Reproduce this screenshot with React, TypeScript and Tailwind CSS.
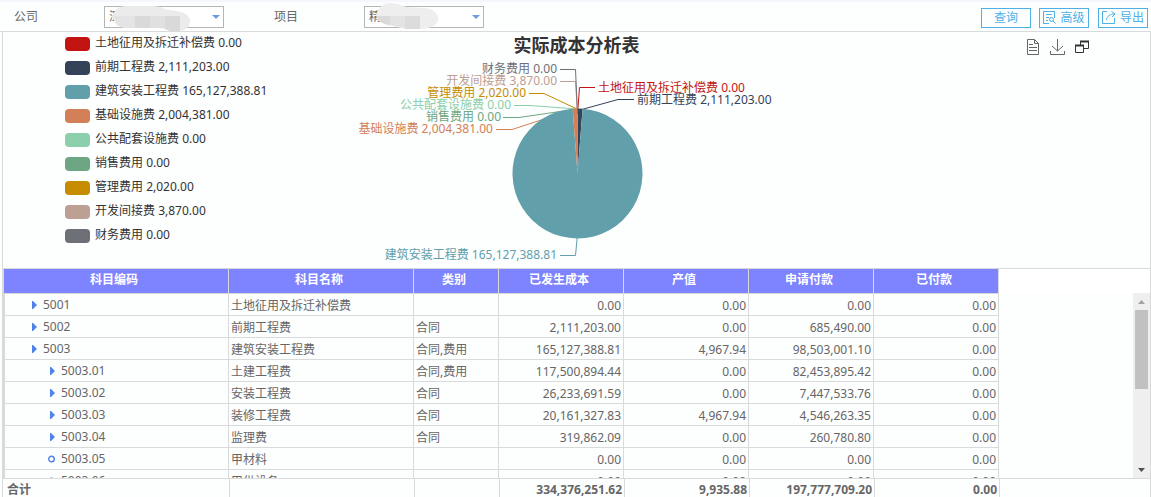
import { FC, ReactNode } from "react";

interface CostItem {
  name: string;
  value: number;
  color: string;
  // leader line and label anchor, relative to the pie centre
  line: string;
  x: number;
  y: number;
  anchor: "start" | "end";
}

interface Row {
  code: string;
  name: string;
  type: string;
  values: string[];
  leaf?: boolean;
}

const items: CostItem[] = [
  { name: "土地征用及拆迁补偿费", value: 0, color: "#c21410", line: "0.5,-60 2.5,-86.5 18,-86.5", x: 21, y: -82, anchor: "start" },
  { name: "前期工程费", value: 2111203, color: "#354358", line: "3,-64 41,-74.5 57,-74.5", x: 60, y: -70, anchor: "start" },
  { name: "建筑安装工程费", value: 165127388.81, color: "#619fab", line: "0.5,60 -1.5,81.5 -17,81.5", x: -20, y: 85, anchor: "end" },
  { name: "基础设施费", value: 2004381, color: "#d37f58", line: "-2,-65 -65,-44.5 -81,-44.5", x: -84, y: -41, anchor: "end" },
  { name: "公共配套设施费", value: 0, color: "#8bcfac", line: "0,-65 -47,-68.5 -63,-68.5", x: -66, y: -65, anchor: "end" },
  { name: "销售费用", value: 0, color: "#6da682", line: "0,-65 -58,-56.5 -74,-56.5", x: -76, y: -53, anchor: "end" },
  { name: "管理费用", value: 2020, color: "#c68c00", line: "0,-65 -33,-80.5 -48,-80.5", x: -51, y: -77, anchor: "end" },
  { name: "开发间接费", value: 3870, color: "#bca094", line: "0.5,-60 -1.5,-92.5 -17,-92.5", x: -20, y: -89, anchor: "end" },
  { name: "财务费用", value: 0, color: "#6e7077", line: "0.5,-60 -1.5,-104.5 -17,-104.5", x: -20, y: -101, anchor: "end" },
];

const headers = ["科目编码", "科目名称", "类别", "已发生成本", "产值", "申请付款", "已付款"];

const rows: Row[] = [
  { code: "5001", name: "土地征用及拆迁补偿费", type: "", values: ["0.00", "0.00", "0.00", "0.00"] },
  { code: "5002", name: "前期工程费", type: "合同", values: ["2,111,203.00", "0.00", "685,490.00", "0.00"] },
  { code: "5003", name: "建筑安装工程费", type: "合同,费用", values: ["165,127,388.81", "4,967.94", "98,503,001.10", "0.00"] },
  { code: "5003.01", name: "土建工程费", type: "合同,费用", values: ["117,500,894.44", "0.00", "82,453,895.42", "0.00"] },
  { code: "5003.02", name: "安装工程费", type: "合同", values: ["26,233,691.59", "0.00", "7,447,533.76", "0.00"] },
  { code: "5003.03", name: "装修工程费", type: "合同", values: ["20,161,327.83", "4,967.94", "4,546,263.35", "0.00"] },
  { code: "5003.04", name: "监理费", type: "合同", values: ["319,862.09", "0.00", "260,780.80", "0.00"] },
  { code: "5003.05", name: "甲材料", type: "", values: ["0.00", "0.00", "0.00", "0.00"], leaf: true },
  { code: "5003.06", name: "甲供设备", type: "", values: ["0.00", "0.00", "0.00", "0.00"], leaf: true },
];

const totals = ["334,376,251.62", "9,935.88", "197,777,709.20", "0.00"];

const format = (value: number) =>
  value.toLocaleString("en-US", { minimumFractionDigits: 2 });

const RADIUS = 65;

const slicePath = (from: number, to: number) => {
  const point = (t: number) => {
    const angle = t * Math.PI * 2;
    return `${RADIUS * Math.sin(angle)} ${-RADIUS * Math.cos(angle)}`;
  };
  return `M0 0L${point(from)}A${RADIUS} ${RADIUS} 0 ${to - from > 0.5 ? 1 : 0} 1 ${point(to)}Z`;
};

const PieChart: FC = () => {
  const total = items.reduce((sum, item) => sum + item.value, 0);
  let start = 0;
  const slices = items.map((item) => {
    const from = start;
    start += item.value / total;
    return { color: item.color, d: slicePath(from, start) };
  });

  return (
    <svg width="441" height="209" viewBox="-221 -115 441 209" className="block">
      {items.map((item) => (
        <polyline key={item.name} points={item.line} fill="none" stroke={item.color} />
      ))}
      <g transform="translate(0.5 -0.5)">
        {slices.map((slice, i) => (
          <path key={i} d={slice.d} fill={slice.color} />
        ))}
      </g>
      {items.map((item) => (
        <text
          key={item.name}
          x={item.x}
          y={item.y}
          textAnchor={item.anchor}
          fill={item.color}
          className="text-xs"
        >
          {item.name} {format(item.value)}
        </text>
      ))}
    </svg>
  );
};

interface FilterProps {
  id: string;
  label: string;
  value: string;
  mask: ReactNode;
}

const Filter: FC<FilterProps> = ({ id, label, value, mask }) => (
  <div className="flex items-center">
    <label htmlFor={id} className="w-[90px]">
      {label}
    </label>
    <div className="relative">
      <select
        id={id}
        className="block h-[22px] w-[120px] appearance-none border border-[#b5b5b5] bg-white pl-1 text-xs text-[#666]"
      >
        <option>{value}</option>
      </select>
      <svg
        width="8"
        height="4"
        viewBox="0 0 8 4"
        className="pointer-events-none absolute right-1 top-[9px]"
      >
        <path d="M0 0h8L4 4z" fill="#6f9be3" />
      </svg>
      <svg
        width="88"
        height="28"
        viewBox="0 0 88 28"
        className="pointer-events-none absolute left-0 -top-[3px]"
      >
        {mask}
      </svg>
    </div>
  </div>
);

const Cols: FC = () => (
  <colgroup>
    <col className="w-[225px]" />
    <col className="w-[185px]" />
    <col className="w-[85px]" />
    <col className="w-[125px]" />
    <col className="w-[125px]" />
    <col className="w-[125px]" />
    <col className="w-[125px]" />
  </colgroup>
);

const toolButton =
  "flex h-5 w-[50px] items-center justify-center gap-1 border border-[#4fb0e6] text-xs leading-none text-[#4fb0e6]";

export default function App() {
  return (
    <main className="bg-[#fdfefe] font-['Noto_Sans','Noto_Sans_CJK_SC',sans-serif] text-xs text-[#666]">
      <header className="flex h-8 items-center justify-between border-b border-t-2 border-b-[#d9dadb] border-t-[#f6f7fc] pl-[14px] pr-[3px]">
        <div className="flex gap-[50px]">
          <Filter
            id="company"
            label="公司"
            value="深"
            mask={
              <>
                <path d="M9 13C10 7 15 3 22 3h27c8 0 10 3 16 4 13 1 21 4 21 11 0 6-4 10-14 10-9 0-12-3-18-3H22C14 25 9 20 9 13z" fill="#ebebeb" />
                <path d="M10 13h21v12h-9C14 24 10 19 10 13z" fill="#e4e4e4" />
                <path d="M46 13h15v12H46z" fill="#e0e0e0" />
                <path d="M31 13h15v12H31zM61 13h15v15H66l-5-2z" fill="#d9d9d9" />
              </>
            }
          />
          <Filter
            id="project"
            label="项目"
            value="精"
            mask={
              <>
                <path d="M12 12C14 4 20 0 27 0c8 0 10 3 16 4l18 1c9 1 13 5 13 11 0 6-6 9-16 10H42l-18-4C17 20 13 18 12 12z" fill="#eeeeee" />
                <path d="M13 13h13v9C18 21 14 18 13 13z" fill="#dadada" />
                <path d="M26 13h15v12l-15-3z" fill="#e3e3e3" />
                <path d="M41 13h15v13H41z" fill="#dcdcdc" />
              </>
            }
          />
        </div>
        <div className="flex pt-[2px]">
          <button className={toolButton}>查询</button>
          <button className={`${toolButton} ml-2`}>
            <svg width="13" height="13" viewBox="0 0 13 13" fill="none" stroke="currentColor">
              <path d="M6 12.5H.5V.5h11V7M3 3.5h6M3 6.5h3M3 9.5h2" />
              <circle cx="8.5" cy="8.5" r="2" />
              <path d="M10 10l2.5 2.5" />
            </svg>
            高级
          </button>
          <button className={`${toolButton} ml-[9px]`}>
            <svg width="14" height="13" viewBox="0 0 14 13" fill="none" stroke="currentColor">
              <path d="M5 .5H.5v12h12V7M4.5 9C5 5 8 3 13 3M9.5.5L13 3 10 6" />
            </svg>
            导出
          </button>
        </div>
      </header>

      <div className="ml-[2px] border-x border-[#d9dadb]">
        <section className="grid grid-cols-[1fr_auto_1fr]">
          <ul className="pl-[62px] text-[#333]">
            {items.map((item) => (
              <li key={item.name} className="flex h-6 items-center gap-[5px]">
                <svg width="25" height="14" className="shrink-0">
                  <rect width="25" height="14" rx="4" fill={item.color} />
                </svg>
                <span className="pb-[2px]">
                  {item.name} {format(item.value)}
                </span>
              </li>
            ))}
          </ul>
          <div>
            <h2 className="h-[27px] text-center text-lg font-bold leading-[27px] text-[#333]">
              实际成本分析表
            </h2>
            <PieChart />
          </div>
          <div className="flex h-[30px] items-center justify-end gap-[10px] pr-[61px] text-[#666]">
            <button aria-label="数据视图">
              <svg width="14" height="16" viewBox="0 0 14 16" fill="none" stroke="currentColor">
                <path d="M1.5.5h7l4 4v11h-11zM8.5.5v4h4M3 5.5h4M3 8.5h8M3 11.5h8" />
              </svg>
            </button>
            <button aria-label="下载">
              <svg width="15" height="16" viewBox="0 0 15 16" fill="none" stroke="currentColor">
                <path d="M7.5 0v12M2 7l5.5 5L13 7M.5 12v3.5h14V12" />
              </svg>
            </button>
            <button aria-label="还原">
              <svg width="14" height="14" viewBox="0 0 14 14" fill="none" stroke="#333">
                <path d="M5.5 5V1.5h8v7H9M.5 5.5h8v7h-8z" />
                <path d="M5 1.5h9M0 5.5h9" strokeWidth="2" />
              </svg>
            </button>
          </div>
        </section>

        <section className="border-t border-[#d9dadb]">
          <div className="bg-white">
            <table className="w-[996px] table-fixed border-separate border-spacing-0 border-l border-[#d9dadb] text-white">
              <Cols />
              <thead>
                <tr className="h-6 bg-[#7e83ff]">
                  {headers.map((header) => (
                    <th key={header} className="border-r border-[#d9dadb] p-0 pb-[2px] pr-1 font-bold leading-5">
                      {header}
                    </th>
                  ))}
                </tr>
              </thead>
            </table>
          </div>

          <div className="flex h-[185px]">
            <div className="flex-1 overflow-hidden">
              <table className="w-[996px] table-fixed border-separate border-spacing-0 border-l border-t border-[#d9dadb]">
                <Cols />
                <tbody>
                  {rows.map((row) => {
                    const nested = row.code.length > 4;
                    return (
                      <tr key={row.code} className="h-[22px]">
                        <td className="border-x border-b border-[#d9dadb] p-0">
                          <div className={`flex items-center gap-[6px] leading-5 ${nested ? "pl-[43px]" : "pl-[25px]"}`}>
                            <svg width="7" height="8" viewBox="0 0 7 8">
                              {row.leaf ? (
                                <circle cx="3.5" cy="4" r="2.8" fill="none" stroke="#4f83e6" strokeWidth="1.4" />
                              ) : (
                                <path d="M2 0h1l4 4-4 4H2z" fill="#4f83e6" />
                              )}
                            </svg>
                            {row.code}
                          </div>
                        </td>
                        <td className="border-b border-r border-[#d9dadb] p-0 pl-[2px] pt-[2px] leading-[19px]">{row.name}</td>
                        <td className="border-b border-r border-[#d9dadb] p-0 pl-[2px] pt-[2px] leading-[19px]">{row.type}</td>
                        {row.values.map((value, i) => (
                          <td key={i} className="border-b border-r border-[#d9dadb] p-0 pr-[2px] pt-[2px] text-right leading-[19px]">
                            {value}
                          </td>
                        ))}
                      </tr>
                    );
                  })}
                </tbody>
              </table>
            </div>
            <div className="flex w-[17px] flex-col items-center bg-[#efefef]">
              <svg width="17" height="17" viewBox="0 0 17 17">
                <path d="M5 11h7L8.5 7z" fill="#a3a3a3" />
              </svg>
              <div className="h-[79px] w-[13px] bg-[#c1c1c1]" />
              <svg width="17" height="17" viewBox="0 0 17 17" className="mt-auto">
                <path d="M5 7h7l-3.5 4z" fill="#505050" />
              </svg>
            </div>
          </div>

          <div className="border-t border-[#d9dadb] pl-[2px]">
            <table className="w-[995px] table-fixed border-separate border-spacing-0 font-bold">
              <Cols />
              <tbody>
                <tr className="h-[18px]">
                  <td className="border-r border-[#d9dadb] p-0 pl-[2px] pt-1 leading-[14px]">合计</td>
                  <td className="border-r border-[#d9dadb] p-0" />
                  <td className="border-r border-[#d9dadb] p-0" />
                  {totals.map((total) => (
                    <td key={total} className="border-r border-[#d9dadb] p-0 pr-[2px] pt-1 text-right leading-[14px]">
                      {total}
                    </td>
                  ))}
                </tr>
              </tbody>
            </table>
          </div>
        </section>
      </div>
    </main>
  );
}
